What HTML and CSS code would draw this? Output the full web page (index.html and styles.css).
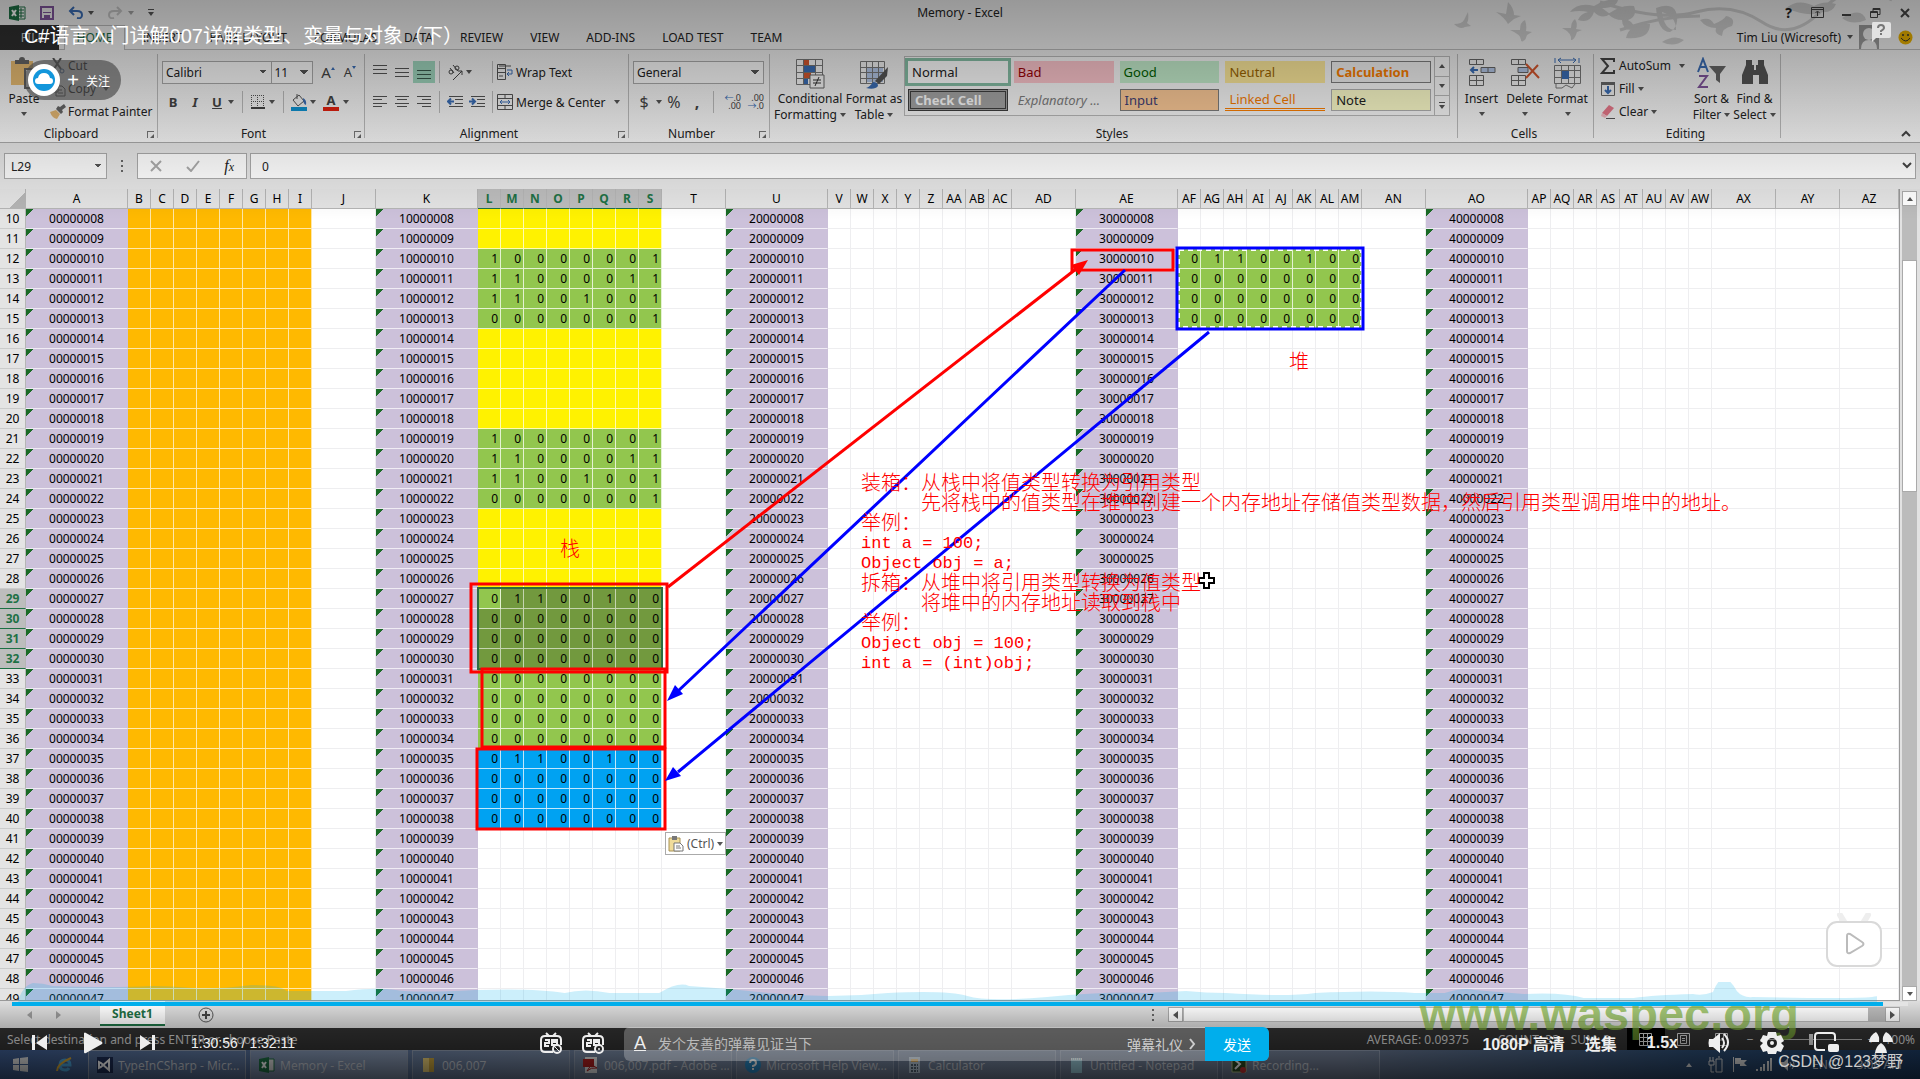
FILE: index.html
```
<!DOCTYPE html>
<html lang="zh-CN">
<head>
<meta charset="UTF-8">
<meta name="viewport" content="width=device-width, initial-scale=1.0">
<title>C#语言入门详解007</title>
<link rel="stylesheet" href="styles.css">
</head>
<body>
<div class="excel">
  <header class="titlebar">
    <svg class="decor" width="460" height="50" viewBox="0 0 460 50" aria-hidden="true">
      <g fill="#cfcfcf">
        <path d="M4 24q8 0 10-4l4-8q1 8-1 11l4 3-6 1q-5 3-11-3z"/>
        <path d="M46 12l10 2 2-12q6 6 6 13l7 1-7 3-6 5q-3-6-12-12z"/>
        <path d="M60 30l10 0q0-8 5-10 2 6 1 11l6 1-5 3q-2 8-6 6 1-6-11-11z"/>
        <path d="M112 28l9 0q0-6 4-9 3 5 1 10l6 1-5 2q-3 9-6 8 1-7-9-12z"/>
        <path d="M120 12q8-10 24-6 12-8 24-6-2 8-16 8l8 6q-8 6-16-2-4 12-16 8 2-6 10-8-8-2-18 0z"/>
        <path d="M158 14q14-10 26-8 4 10-6 14 8 4 4 10-10 0-10-10-8 0-14-6z"/>
        <path d="M212 12q2 18 14 18 0-14-14-18zM206 8q16-6 20 4 4 14-6 20-12 0-14-24zM176 38q4-16 24-14 0 16-24 14zM212 42q12-8 22-2-10 8-22 2z"/>
        <path d="M250 20q10-4 14 4 10-4 12-8 10 2 6 10-10 2-10 10-8-2-6-8-10 0-16-8z"/>
        <path d="M336 8q12-10 28-2 10-6 22-2-4 10-16 8-10 6-34-4zM392 18q10 8 24 2-4-14-24-2z"/>
      </g>
      <path d="M150 2q60 20 96 10t66 10 60-12 70-10M170 30q40-14 80-14" fill="none" stroke="#cfcfcf" stroke-width="3"/>
    </svg>
    <div class="quick">
      <svg width="17" height="16" viewBox="0 0 17 16"><path d="M7 2h9v12H7z" fill="#f4f4f4" stroke="#1e7145"/><path d="M9 5h6M9 8h6M9 11h6M12 3v10" stroke="#1e7145"/><path d="M0 2l10-2v16L0 14z" fill="#1e7145"/><path d="M3 5l4 6M7 5l-4 6" stroke="#fff" stroke-width="2"/></svg>
      <svg width="14" height="14" viewBox="0 0 14 14"><path d="M1 1h12v12H1z" fill="none" stroke="#80559c" stroke-width="2"/><path d="M3 6h8v1H3zM4 9h6v4H4z" fill="#80559c"/></svg>
      <span class="pair"><svg width="15" height="13" viewBox="0 0 15 13"><path d="M6 1L2 5l4 4M2 5h7q5 0 5 4t-5 3" fill="none" stroke="#3a6db5" stroke-width="2"/></svg><i class="caret"></i></span>
      <span class="pair faded"><svg width="15" height="13" viewBox="0 0 15 13"><path d="M9 1l4 4-4 4M13 5H6Q1 5 1 9t5 3" fill="none" stroke="#999" stroke-width="2"/></svg><i class="caret"></i></span>
      <span class="more"><i class="caret"></i></span>
    </div>
    <h1>Memory - Excel</h1>
    <div class="window-buttons">
      <button type="button" aria-label="Help"><b>?</b></button>
      <button type="button" aria-label="Ribbon display"><svg width="13" height="11" viewBox="0 0 13 11" fill="none" stroke="#444"><path d="M.5.5h12v10H.5zM.5 2.500h12M6.500 9V4.500M4.500 6l2-2 2 2"/></svg></button>
      <button type="button" aria-label="Minimize"><svg width="10" height="10" viewBox="0 0 10 10"><path d="M0 6h9v2H0z" fill="#444"/></svg></button>
      <button type="button" aria-label="Restore"><svg width="11" height="10" viewBox="0 0 11 10" fill="none" stroke="#444"><path d="M.5 3.500h7v6h-7zM.5 4.500h7M3 3V.5h7v6H8M3 1.500h7"/></svg></button>
      <button type="button" aria-label="Close"><svg width="10" height="10" viewBox="0 0 10 10"><path d="M1 1l8 8M9 1L1 9" stroke="#444" stroke-width="2"/></svg></button>
    </div>
  </header>

  <nav class="tabs">
    <a class="file" href="#">FILE</a>
    <a class="active" href="#">HOME</a>
    <a href="#">INSERT</a>
    <a href="#">PAGE LAYOUT</a>
    <a href="#">FORMULAS</a>
    <a href="#">DATA</a>
    <a href="#">REVIEW</a>
    <a href="#">VIEW</a>
    <a href="#">ADD-INS</a>
    <a href="#">LOAD TEST</a>
    <a href="#">TEAM</a>
    <div class="account">
      <span>Tim Liu (Wicresoft)</span><i class="caret"></i>
      <svg class="avatar" width="24" height="24" viewBox="0 0 24 24"><path d="M0 0h20v24H0z" fill="#9a9a9a"/><circle cx="10" cy="9" r="6" fill="#eee"/><path d="M2 24q0-9 8-9t8 9z" fill="#eee"/></svg>
      <svg class="smile" width="15" height="15" viewBox="0 0 15 15"><circle cx="7.500" cy="7.500" r="7" fill="#e8b000"/><circle cx="5" cy="5" r="1" fill="#333"/><circle cx="10" cy="5" r="1" fill="#333"/><path d="M3 8q5 6 9 0" fill="none" stroke="#333"/></svg>
    </div>
  </nav>

  <section class="ribbon">
    <div class="group clipboard">
      <div class="group-body">
        <button type="button" class="big paste">
          <svg width="28" height="32" viewBox="0 0 28 32"><path d="M1 4h22v24H1z" fill="#e9bd73"/><path d="M5 7V3h4q0-3 3-3t3 3h4v4z" fill="#666"/><path d="M15 12h12v19H15z" fill="#fff" stroke="#666" stroke-width="2"/></svg>
          <span>Paste</span><i class="caret"></i>
        </button>
        <div class="stack">
          <button type="button"><svg width="16" height="16" viewBox="0 0 16 16"><path d="M3 0l8 11M11 0L4 11" stroke="#555" stroke-width="2"/><circle cx="3" cy="13" r="2" fill="none" stroke="#44699c"/><circle cx="12" cy="13" r="2" fill="none" stroke="#44699c"/></svg>Cut</button>
          <button type="button"><svg width="16" height="16" viewBox="0 0 16 16" fill="none" stroke="#555"><path d="M1 1h7v10H1zM6 5h6l3 3v7H6zM8 9h4M8 12h5"/></svg>Copy<i class="caret far"></i></button>
          <button type="button"><svg width="16" height="16" viewBox="0 0 16 16"><path d="M0 8l6-2 4 4-3 5q-5-1-7-7z" fill="#e5b873"/><path d="M6 5l5 5 2-2-1-2 4-3-2-3-4 3-2-1z" fill="#666"/></svg>Format Painter</button>
        </div>
      </div>
      <div class="group-label">Clipboard<i class="launcher"></i></div>
    </div>

    <div class="group font">
      <div class="group-body rows">
        <div class="row">
          <select class="font-name" aria-label="Font"><option>Calibri</option></select><select class="font-size" aria-label="Font size"><option>11</option></select>
          <button type="button" class="icon grow">A<sup class="up"></sup></button>
          <button type="button" class="icon shrink">A<sup class="down"></sup></button>
        </div>
        <div class="row">
          <button type="button" class="icon"><b>B</b></button>
          <button type="button" class="icon"><b><i>I</i></b></button>
          <button type="button" class="icon"><b><u>U</u></b></button><i class="caret"></i>
          <i class="sep"></i>
          <button type="button" class="icon" aria-label="Borders"><svg width="14" height="14" viewBox="0 0 14 14"><path d="M.5 0v12M6.500 0v12M12.500 0v12M0 .5h13M0 6.500h13" stroke="#555" stroke-dasharray="1 1"/><path d="M0 13h14" stroke="#444" stroke-width="2"/></svg></button><i class="caret"></i>
          <i class="sep"></i>
          <button type="button" class="icon" aria-label="Fill colour"><svg width="16" height="17" viewBox="0 0 16 17"><path d="M2 6l6-5 5 6-6 5zM6 0v5" fill="none" stroke="#555"/><path d="M12 4q4 2 3 7-3-1-3-7z" fill="#3a6db5"/><path d="M0 13h16v4H0z" fill="#0e93d2"/></svg></button><i class="caret"></i>
          <button type="button" class="icon font-color" aria-label="Font colour"><b>A</b></button><i class="caret"></i>
        </div>
      </div>
      <div class="group-label">Font<i class="launcher"></i></div>
    </div>

    <div class="group alignment">
      <div class="group-body rows">
        <div class="row">
          <button type="button" class="icon" aria-label="Top"><svg width="14" height="14" viewBox="0 0 14 14" stroke="#555"><path d="M0 .5h14M0 4.500h14M0 8.500h14"/></svg></button>
          <button type="button" class="icon" aria-label="Middle"><svg width="14" height="14" viewBox="0 0 14 14" stroke="#555"><path d="M0 3.500h14M0 7.500h14M0 11.500h14"/></svg></button>
          <button type="button" class="icon pressed" aria-label="Bottom"><svg width="14" height="14" viewBox="0 0 14 14" stroke="#3a5a4c"><path d="M0 5.500h14M0 9.500h14M0 13.500h14"/></svg></button>
          <i class="sep"></i>
          <button type="button" class="icon" aria-label="Orientation"><svg width="17" height="17" viewBox="0 0 17 17" fill="none" stroke="#444"><circle cx="4" cy="8" r="2"/><path d="M3 4l4 5M6 1l5 6"/><circle cx="10" cy="4" r="2"/><path d="M6 16l9-9M11 7h4v4"/></svg></button><i class="caret"></i>
          <i class="sep push"></i>
          <button type="button" class="label-button"><svg width="16" height="16" viewBox="0 0 16 16" fill="none" stroke="#555"><path d="M.5.5h8v15h-8zM.5 4.500h8M.5 8.500h8M2 2h12M2 12h4"/><path d="M10 6h5v4h-5M12 8l-2 2 2 2" stroke="#3a6db5"/></svg>Wrap Text</button>
        </div>
        <div class="row">
          <button type="button" class="icon" aria-label="Left"><svg width="14" height="12" viewBox="0 0 14 12" stroke="#555"><path d="M0 .5h14M0 3.500h9M0 7.500h14M0 10.500h9"/></svg></button>
          <button type="button" class="icon" aria-label="Center"><svg width="14" height="12" viewBox="0 0 14 12" stroke="#555"><path d="M0 .5h14M2 3.500h10M0 7.500h14M2 10.500h10"/></svg></button>
          <button type="button" class="icon" aria-label="Right"><svg width="14" height="12" viewBox="0 0 14 12" stroke="#555"><path d="M0 .5h14M5 3.500h9M0 7.500h14M5 10.500h9"/></svg></button>
          <i class="sep"></i>
          <button type="button" class="icon" aria-label="Outdent"><svg width="16" height="12" viewBox="0 0 16 12" stroke="#555"><path d="M2 .5h14M8 3.500h8M8 7.500h8M2 10.500h14"/><path d="M7 5.500H1M4 2.500l-3 3 3 3" fill="none" stroke="#3a6db5" stroke-width="2"/></svg></button>
          <button type="button" class="icon" aria-label="Indent"><svg width="16" height="12" viewBox="0 0 16 12" stroke="#555"><path d="M2 .5h14M8 3.500h8M8 7.500h8M2 10.500h14"/><path d="M0 5.500h6M3 2.500l3 3-3 3" fill="none" stroke="#3a6db5" stroke-width="2"/></svg></button>
          <i class="sep"></i>
          <button type="button" class="label-button"><svg width="16" height="16" viewBox="0 0 16 16" fill="none" stroke="#555"><path d="M.5.5h15v15H.5zM.5 4.500h15M.5 11.500h15M8 0v4M8 12v4"/><path d="M3 8h10M5 6L3 8l2 2M11 6l2 2-2 2" stroke="#3a6db5"/></svg>Merge &amp; Center</button><i class="caret wide"></i>
        </div>
      </div>
      <div class="group-label">Alignment<i class="launcher"></i></div>
    </div>

    <div class="group number">
      <div class="group-body rows">
        <div class="row"><select class="format" aria-label="Number format"><option>General</option></select></div>
        <div class="row">
          <button type="button" class="icon sign">$</button><i class="caret"></i>
          <button type="button" class="icon sign">%</button>
          <button type="button" class="icon sign"><b>,</b></button>
          <i class="sep"></i>
          <button type="button" class="icon decimal"><span><em>←</em>.0</span><span>.00</span></button>
          <button type="button" class="icon decimal"><span>.00</span><span><em>→</em>.0</span></button>
        </div>
      </div>
      <div class="group-label">Number<i class="launcher"></i></div>
    </div>

    <div class="group styles">
      <div class="group-body">
        <button type="button" class="big cond">
          <svg width="30" height="32" viewBox="0 0 30 32"><path d="M1 2h26v25H1z" fill="#f8f8f8"/><path d="M8 2h6v6H8zM8 15h8v6H8z" fill="#d4572e"/><path d="M8 9h12v6H8zM8 21h5v6H8z" fill="#3a6db5"/><path d="M1.500 2.500h26v25h-26zM1 8.500h26M1 15.500h26M1 21.500h26M8.500 2v25M20.500 2v25" fill="none" stroke="#777"/><path d="M15 18h14v13H15z" fill="#f8f8f8" stroke="#666"/><path d="M18 23h8M18 26h8M24 20l-4 9" stroke="#333"/></svg>
          <span>Conditional</span><span>Formatting<i class="caret"></i></span>
        </button>
        <button type="button" class="big table-btn">
          <svg width="30" height="32" viewBox="0 0 30 32"><path d="M8 10h16v15H8z" fill="#b4c7e7"/><path d="M1.500 4.500h24v22h-24zM1 10.500h25M1 15.500h25M1 21.500h25M7.500 4v22M13.500 4v22M19.500 4v22" fill="none" stroke="#777"/><path d="M29 10l-1 9-8 8-4-3z" fill="#555"/><path d="M14 25q5 0 5 4-3 4-12 2 4-1 7-6z" fill="#3a6db5"/></svg>
          <span>Format as</span><span>Table<i class="caret"></i></span>
        </button>
        <div class="gallery">
          <div class="cells">
            <button type="button" class="normal">Normal</button>
            <button type="button" class="bad">Bad</button>
            <button type="button" class="good">Good</button>
            <button type="button" class="neutral">Neutral</button>
            <button type="button" class="calc">Calculation</button>
            <button type="button" class="check">Check Cell</button>
            <button type="button" class="explain">Explanatory ...</button>
            <button type="button" class="input">Input</button>
            <button type="button" class="linked">Linked Cell</button>
            <button type="button" class="note">Note</button>
          </div>
          <div class="gallery-scroll"><button type="button" aria-label="Up"><i class="caret flip"></i></button><button type="button" aria-label="Down"><i class="caret"></i></button><button type="button" aria-label="More"><span class="more"><i class="caret"></i></span></button></div>
        </div>
      </div>
      <div class="group-label plain">Styles</div>
    </div>

    <div class="group cellgroup">
      <div class="group-body">
        <button type="button" class="big"><svg width="28" height="32" viewBox="0 0 28 32" fill="none" stroke="#666"><path d="M1.500 2.500h14v5h-14zM8.500 2v5M1.500 18.500h14v10h-14zM8.500 18v10M1 23.500h14"/><path d="M13 10.500h14v5H13zM20 10v5" fill="#b4c7e7"/><path d="M10 13H3M6 10l-3 3 3 3" stroke="#3a6db5" stroke-width="2"/></svg><span>Insert</span><i class="caret"></i></button>
        <button type="button" class="big"><svg width="30" height="32" viewBox="0 0 30 32" fill="none" stroke="#666"><path d="M1.500 2.500h14v5h-14zM8.500 2v5M1.500 18.500h14v10h-14zM8.500 18v10M1 23.500h14"/><path d="M8 10.500h10v5H8z" fill="#b4c7e7"/><path d="M16 7l13 14M28 8L16 21" stroke="#d4572e" stroke-width="2"/></svg><span>Delete</span><i class="caret"></i></button>
        <button type="button" class="big"><svg width="30" height="32" viewBox="0 0 30 32" fill="none" stroke="#777"><path d="M1.500 8.500h26v18h-26zM1 13.500h26M1 20.500h26M8.500 8v18M15.500 8v18M21.500 8v18M3 27v4h6l4-3 6 3 3-4"/><path d="M9 14h7v8H9z" fill="#3a6db5" stroke="none"/><path d="M2 1v5M26 1v5M5 3h18M8 1L5 3l3 3M20 1l3 2-3 3" stroke="#3a6db5"/></svg><span>Format</span><i class="caret"></i></button>
      </div>
      <div class="group-label plain">Cells</div>
    </div>

    <div class="group editing">
      <div class="group-body">
        <div class="stack">
          <button type="button"><svg width="16" height="16" viewBox="0 0 16 16"><path d="M14 4V1H2l6 7-6 7h12v-3" fill="none" stroke="#444" stroke-width="2"/></svg>AutoSum<i class="caret far"></i></button>
          <button type="button"><svg width="16" height="16" viewBox="0 0 16 16"><path d="M1.500 1.500h13v13h-13z" fill="#f4f4f4" stroke="#666"/><path d="M1 1h14v3H1z" fill="#666"/><path d="M8 5v7M5 9l3 3 3-3" fill="none" stroke="#3a6db5" stroke-width="2"/></svg>Fill<i class="caret"></i></button>
          <button type="button"><svg width="16" height="16" viewBox="0 0 16 16"><path d="M2 9l7-8 5 3-7 8z" fill="#e8788a"/><path d="M2 9l5 3-2 2-4-2z" fill="#f5bcc4"/><path d="M6 14.500h9" stroke="#555"/></svg>Clear<i class="caret"></i></button>
        </div>
        <button type="button" class="big"><svg width="30" height="32" viewBox="0 0 30 32" fill="none"><path d="M1 15L6 2l5 13M3 10h6" stroke="#3a6db5" stroke-width="2"/><path d="M2 19h8L2 30h9" stroke="#80559c" stroke-width="2"/><path d="M12 9h17l-6 8v9l-4-3v-6z" fill="#666"/></svg><span>Sort &amp;</span><span>Filter<i class="caret"></i></span></button>
        <button type="button" class="big"><svg width="28" height="32" viewBox="0 0 28 32" fill="#555"><path d="M5 3h6v5h2v5h2V8h2V3h6v5l4 10v9h-9v-9h-6v9H1v-9L5 8z"/></svg><span>Find &amp;</span><span>Select<i class="caret"></i></span></button>
      </div>
      <div class="group-label plain">Editing</div>
    </div>
    <svg class="collapse" width="10" height="8" viewBox="0 0 10 8"><path d="M1 6l4-4 4 4" fill="none" stroke="#444" stroke-width="2"/></svg>
  </section>

  <section class="formula-bar">
    <select class="namebox" aria-label="Name box"><option>L29</option></select>
    <i class="dots"></i>
    <div class="fx">
      <svg width="12" height="12" viewBox="0 0 12 12"><path d="M1 1l10 10M11 1L1 11" stroke="#aaa" stroke-width="2"/></svg>
      <svg width="14" height="12" viewBox="0 0 14 12"><path d="M1 7l4 4 8-10" fill="none" stroke="#aaa" stroke-width="2"/></svg>
      <em>f<small>x</small></em>
    </div>
    <div class="formula">
      <input type="text" value="0" aria-label="Formula">
      <svg width="10" height="8" viewBox="0 0 10 8"><path d="M1 1l4 4 4-4" fill="none" stroke="#444" stroke-width="2"/></svg>
    </div>
  </section>

  <main class="workspace">
    <div class="sheet">
      <table id="grid"></table>

      <svg class="marks" width="1400" height="810" viewBox="0 0 1400 810" aria-hidden="true">
        <rect x="478" y="399" width="184" height="81" fill="none" stroke="#2f6b3f" stroke-width="2"/>
        <rect x="1179" y="61" width="182" height="77" fill="none" stroke="#fff" stroke-width="2" stroke-dasharray="5 4"/>
        <g fill="none" stroke="#f00" stroke-width="3">
          <rect x="471" y="395" width="196" height="88"/>
          <rect x="482" y="480" width="183" height="78"/>
          <rect x="477" y="560" width="188" height="80"/>
          <rect x="1072" y="61" width="101" height="20"/>
          <path d="M668 398L1076 80"/>
        </g>
        <path d="M1088 71l-9 15-8-10z" fill="#f00"/>
        <g fill="none" stroke="#00f" stroke-width="3">
          <rect x="1177" y="59" width="186" height="81"/>
          <path d="M1125 81L677 503M1209 143L678 583"/>
        </g>
        <path d="M667 512l8-16 8 9zM665 592l8-14 8 9z" fill="#00f"/>
        <path d="M1204 384h5v5h5v5h-5v5h-5v-5h-5v-5h5z" fill="#fff" stroke="#000" stroke-width="2"/>
      </svg>
      <span class="mark stack-mark">栈</span>
      <span class="mark heap-mark">堆</span>
      <div class="notes">
        <p>装箱：从栈中将值类型转换为引用类型</p>
        <p class="indent">先将栈中的值类型在堆中创建一个内存地址存储值类型数据，然后引用类型调用堆中的地址。</p>
        <p>举例：</p>
        <p class="code">int a = 100;</p>
        <p class="code">Object obj = a;</p>
        <p>拆箱：从堆中将引用类型转换为值类型</p>
        <p class="indent">将堆中的内存地址读取到栈中</p>
        <p>举例：</p>
        <p class="code">Object obj = 100;</p>
        <p class="code">int a = (int)obj;</p>
      </div>
      <button type="button" class="paste-options">
        <svg width="16" height="17" viewBox="0 0 16 17"><path d="M1 3h11v13H1z" fill="#f0dc9a" stroke="#a89254"/><path d="M4 1h5v4H4z" fill="#777"/><path d="M6 8h6l3 3v5H6z" fill="#fff" stroke="#777"/><path d="M8 11h4M8 13h5" stroke="#777"/></svg>
        (Ctrl)<i class="caret"></i>
      </button>
    </div>
    <div class="vscroll">
      <button type="button" aria-label="Scroll up"><i class="caret flip"></i></button>
      <div class="track"><div class="thumb"></div></div>
      <button type="button" aria-label="Scroll down"><i class="caret"></i></button>
    </div>
  </main>

  <section class="sheet-tabs">
    <i class="arrow left"></i><i class="arrow right"></i>
    <a class="sheet-tab" href="#">Sheet1</a>
    <svg width="18" height="18" viewBox="0 0 18 18"><circle cx="9" cy="9" r="7" fill="none" stroke="#555"/><path d="M9 5v8M5 9h8" stroke="#444" stroke-width="2"/></svg>
    <i class="dots"></i>
    <div class="hscroll">
      <button type="button" aria-label="Scroll left"><i class="arrow left"></i></button>
      <div class="thumb"></div>
      <button type="button" aria-label="Scroll right"><i class="arrow right"></i></button>
    </div>
  </section>

  <footer class="status">
    <span class="message">Select destination and press ENTER or choose Paste</span>
    <span class="average">AVERAGE: 0.09375</span><span class="count">COUNT: 32</span><span class="sum">SUM: 3</span>
    <i class="view on"><svg width="13" height="13" viewBox="0 0 13 13" fill="none" stroke="#ccc"><path d="M.5.5h12v12H.5zM4.500 0v13M8.500 0v13M0 4.500h13M0 8.500h13"/></svg></i>
    <i class="view"><svg width="13" height="13" viewBox="0 0 13 13" fill="none" stroke="#ccc"><path d="M.5.5h12v12H.5zM3.500 2.500h6v8h-6zM5 5.500h3M5 7.500h3"/></svg></i>
    <i class="view"><svg width="13" height="13" viewBox="0 0 13 13" fill="none" stroke="#ccc"><path d="M.5.5h12v12H.5zM4.500 0v7h4V0"/></svg></i>
    <span>−</span><input type="range" aria-label="Zoom" value="50"><span>+</span><span class="zoom">100%</span>
  </footer>

  <nav class="taskbar">
    <a class="pin" href="#" aria-label="Start"><svg width="15" height="15" viewBox="0 0 15 15" fill="#e0e0e0"><path d="M0 2l6-1v6H0zM7 1l8-1v7H7zM0 8h6v6l-6-1zM7 8h8v7l-8-1z"/></svg></a>
    <a class="pin" href="#" aria-label="Internet Explorer"><svg width="17" height="17" viewBox="0 0 17 17" fill="none"><path d="M4 9h10q0-5-5-5t-5 5 5 5q3 0 4-2" stroke="#4aa3d8" stroke-width="3"/><path d="M1 15Q1 8 15 2" stroke="#d8a733" stroke-width="2"/></svg></a>
    <a class="task" href="#"><svg width="16" height="16" viewBox="0 0 16 16"><path d="M0 0h16v16H0z" fill="#1d2d55"/><path d="M12 3v10L4 6 2 5v6l2-1 8-7z" fill="none" stroke="#fff" stroke-width="2"/></svg>TypeInCSharp - Micr...</a>
    <a class="task current" href="#"><svg width="16" height="16" viewBox="0 0 16 16"><path d="M8 2h7v12H8z" fill="#ddd" stroke="#1e7145"/><path d="M0 2l10-2v16L0 14z" fill="#1e7145"/><path d="M3 5l4 6M7 5l-4 6" stroke="#fff" stroke-width="2"/></svg>Memory - Excel</a>
    <a class="task" href="#"><svg width="16" height="16" viewBox="0 0 16 16"><path d="M2 1h9v14H2z" fill="#f0d47a"/><path d="M8 1h5v14H8z" fill="#cfa93f"/></svg>006,007</a>
    <a class="task" href="#"><svg width="16" height="16" viewBox="0 0 16 16"><path d="M2 0h12v16H2z" fill="#eee"/><path d="M0 2h11v8H0z" fill="#b32020"/><path d="M4 14q4-5 5-9 1 5 5 6-6-1-10 3z" fill="none" stroke="#b32020"/></svg>006,007.pdf - Adobe ...</a>
    <a class="task" href="#"><svg width="16" height="16" viewBox="0 0 16 16"><circle cx="8" cy="8" r="8" fill="#2a8ac6"/><path d="M5 6q0-3 3-3t3 3q0 2-3 3v1M8 11v2" fill="none" stroke="#fff" stroke-width="2"/></svg>Microsoft Help View...</a>
    <a class="task" href="#"><svg width="16" height="16" viewBox="0 0 16 16"><path d="M2 0h11v16H2z" fill="#bcd"/><path d="M4 2h7v3H4z" fill="#e8b96a"/><path d="M4 8h7M4 11h7M4 14h7" stroke="#567" stroke-dasharray="2 1" stroke-width="2"/></svg>Calculator</a>
    <a class="task" href="#"><svg width="16" height="16" viewBox="0 0 16 16"><path d="M2 1h11v15H2z" fill="#9fd0df"/><path d="M2 2h11" stroke="#eee" stroke-width="2" stroke-dasharray="1 1"/></svg>Untitled - Notepad</a>
    <a class="task" href="#"><svg width="16" height="16" viewBox="0 0 16 16"><path d="M1 0h14v15H1z" fill="#2c4a22" stroke="#b9c98a"/><path d="M4 3l5 4-5 5" fill="none" stroke="#fff" stroke-width="2"/><circle cx="12" cy="13" r="3" fill="#c33"/></svg>Recording...</a>
    <div class="tray">
      <i class="caret flip"></i>
      <svg width="16" height="17" viewBox="0 0 16 17" fill="none" stroke="#ddd"><path d="M8 3h6v13H8zM10 1h2M2 1v4M5 1v4M1 5h5v4H1zM3 9v7h3"/></svg>
      <svg width="16" height="15" viewBox="0 0 16 15" fill="#ddd"><path d="M1 0h1v15H1zM3 1h6v2h6l-3 3 3 3H8V7H3z"/></svg>
      <svg width="17" height="13" viewBox="0 0 17 13" fill="#ddd"><path d="M0 11h2v2H0zM4 9h2v4H4zM7 6h2v7H7zM11 3h2v10h-2zM14 0h2v13h-2z"/></svg>
      <svg width="15" height="13" viewBox="0 0 15 13" fill="#ddd"><path d="M0 4h3l4-4v13L3 9H0z"/><path d="M9 4q2 2 0 5M11 2q4 4 0 9" fill="none" stroke="#ddd"/></svg>
      <span class="lang">ENG</span><span class="clock">3:00 AM</span>
    </div>
  </nav>
</div>

<!-- video player layer -->
<div class="player">
  <div class="player-top">
    <h2>C#语言入门详解007详解类型、变量与对象（下）</h2>
    <button type="button" class="follow">
      <svg width="32" height="32" viewBox="0 0 32 32"><circle cx="16" cy="16" r="16" fill="#fff"/><circle cx="16" cy="16" r="11" fill="#1296db"/><path d="M10 20q-3 0-3-3t3-3q1-5 6-5t6 5q3 0 3 3t-3 3z" fill="#fff"/></svg>
      <b>+</b> 关注
    </button>
    <svg class="bubble" width="20" height="20" viewBox="0 0 20 20"><path d="M2 0h16q2 0 2 2v12q0 2-2 2H5l-4 4V2q0-2 1-2z" fill="#e2e2e2"/><path d="M7 6q0-3 3-3t3 3q0 1-3 3v1M10 11v2" fill="none" stroke="#777" stroke-width="2"/></svg>
  </div>
  <svg class="tv" width="58" height="56" viewBox="0 0 58 56"><g fill="#fff" stroke="#d9d9d9"><path d="M15 2l6 10M43 2l-6 10" stroke="#eee" stroke-width="6" stroke-linecap="round"/><rect x="2" y="9" width="54" height="44" rx="10" stroke-width="2"/></g><path d="M22 23q0-3 3-2l12 8q3 2 0 4l-12 7q-3 1-3-2z" fill="#fff" stroke="#bbb" stroke-width="2"/></svg>
  <span class="site-mark">www.waspec.org</span>
  <div class="player-bottom">
    <svg class="heat" viewBox="0 0 1870 20" preserveAspectRatio="none" aria-hidden="true"><path d="M0 20Q4 4 15 1q10 0 20 3 60 2 100 0 20 0 40 2t60-3q30 0 35 6h60q30-4 50-1t80 0q60-2 90 3 20-5 45 0h50q20-12 30-7l40 3 40 4q60 6 120 0 60-3 80 3t80 1q60-6 100-4l40-2q20 2 40 2 60 4 90 0 60-3 100 0h30q20-6 30-3l50 4q40-2 60 4h50q20-3 60-4 10 2 20-2 10-26 24-1 6 7 16 6 100 2 120 0 20-3 50-2h100q60-5 75-1 10 3 8 8v6z"/></svg>
    <progress max="1896" value="1871"></progress>
    <div class="controls">
      <button type="button" aria-label="Previous"><svg width="16" height="17" viewBox="0 0 16 17"><path d="M0 1h3v15H0zM15 1v15L4 9z"/></svg></button>
      <button type="button" class="play" aria-label="Play"><svg width="20" height="22" viewBox="0 0 20 22"><path d="M1 1q1-1 2 0l16 9q1 1 0 2L3 21q-2 1-2-1z"/></svg></button>
      <button type="button" class="next" aria-label="Next"><svg width="16" height="17" viewBox="0 0 16 17"><path d="M13 1h3v15h-3zM1 1v15l11-7z"/></svg></button>
      <span class="time">1:30:56 / 1:32:11</span>
      <button type="button" class="danmu" aria-label="弹幕"><svg width="22" height="22" viewBox="0 0 22 22"><path d="M6 1l3 3M16 1l-3 3M13 20H5q-4 0-4-4V8q0-4 4-4h12q4 0 4 4v5M5 8h4v3H5v3h4M12 8h5v5h-5zM12 10h5" fill="none" stroke="#eee" stroke-width="2"/><circle cx="17" cy="17" r="4" fill="none" stroke="#eee" stroke-width="2"/><path d="M14 14l6 6" stroke="#eee"/></svg></button>
      <button type="button" class="danmu" aria-label="弹幕设置"><svg width="22" height="22" viewBox="0 0 22 22"><path d="M6 1l3 3M16 1l-3 3M13 20H5q-4 0-4-4V8q0-4 4-4h12q4 0 4 4v5M5 8h4v3H5v3h4M12 8h5v5h-5zM12 10h5" fill="none" stroke="#eee" stroke-width="2"/><circle cx="17" cy="17" r="4" fill="none" stroke="#eee" stroke-width="2"/><circle cx="17" cy="17" r="1"/></svg></button>
      <form class="send">
        <u>A</u>
        <input type="text" placeholder="发个友善的弹幕见证当下" aria-label="弹幕">
        <a href="#">弹幕礼仪<svg width="7" height="12" viewBox="0 0 7 12"><path d="M1 1l4 5-4 5" fill="none" stroke="#ccc" stroke-width="2"/></svg></a>
        <button type="button">发送</button>
      </form>
      <div class="options">
        <button type="button" class="quality">1080P 高清</button>
        <button type="button" class="episodes">选集</button>
        <button type="button" class="speed">1.5x</button>
        <button type="button" aria-label="音量"><svg width="22" height="20" viewBox="0 0 22 20"><path d="M1 6h4l7-6v20l-7-6H1q-1-4 0-8z"/><path d="M14 5q4 5 0 10M16 1q8 8 0 17" fill="none" stroke="#eee" stroke-width="2"/></svg></button>
        <button type="button" aria-label="设置"><svg width="24" height="22" viewBox="0 0 24 22"><path fill-rule="evenodd" d="M8 0h8l1 4 4-1 3 6-3 2 3 3-3 6-4-1-1 3H8l-1-3-4 1-3-6 3-3-3-2 3-6 4 1zM12 6a5 5 0 100 10 5 5 0 000-10z"/><circle cx="12" cy="11" r="2"/></svg></button>
        <button type="button" aria-label="小窗"><svg width="25" height="21" viewBox="0 0 25 21"><path d="M11 18H4q-3 0-3-3V4q0-3 3-3h14q3 0 3 3v5" fill="none" stroke="#eee" stroke-width="2"/><rect x="14" y="12" width="11" height="8" rx="2"/></svg></button>
        <button type="button" aria-label="全屏"><svg width="24" height="22" viewBox="0 0 24 22"><path d="M7 0q4 4 3 10H0Q1 3 7 0zM17 0q6 3 7 10H14q-1-6 3-10zM12 11q5 3 6 10H6q1-7 6-10z"/></svg></button>
      </div>
    </div>
  </div>
  <span class="csdn">CSDN @123梦野</span>
</div>
<script src="app.js"></script>
</body>
</html>
```

FILE: styles.css
```
* {
  box-sizing: border-box;
}

body {
  margin: 0;
  height: 100vh;
  overflow: hidden;
  position: relative;
  font-family: "Noto Sans", "Noto Sans CJK SC", sans-serif;
  font-size: 12px;
  color: #222;
}

button,
select,
input {
  font: inherit;
  color: inherit;
}

button {
  border: 0;
  padding: 0;
  background: none;
}

a {
  color: inherit;
  text-decoration: none;
}

svg {
  display: block;
  flex: none;
}

.excel {
  height: 100%;
  display: flex;
  flex-direction: column;
  background: #f1f1f1;
}

.caret {
  display: inline-block;
  flex: none;
  border: 3px solid transparent;
  border-top: 4px solid #555;
  border-bottom: 0;
}

.caret.flip {
  border-top: 0;
  border-bottom: 4px solid #555;
}

/* title bar */
.titlebar {
  position: relative;
  height: 25px;
  flex: none;
  display: grid;
  grid-template-columns: 1fr auto 1fr;
  align-items: center;
}

.decor {
  position: absolute;
  right: 10px;
  top: 0;
}

.titlebar h1 {
  margin: 0;
  font-size: 12px;
  font-weight: normal;
}

.quick {
  display: flex;
  align-items: center;
  gap: 14px;
  padding-left: 9px;
}

.pair {
  display: flex;
  align-items: center;
  gap: 5px;
}

.faded {
  opacity: .5;
}

.more {
  border-top: 1px solid #555;
  display: flex;
  padding-top: 2px;
}

.window-buttons {
  position: relative;
  display: flex;
  justify-content: flex-end;
  padding-right: 1px;
}

.window-buttons button {
  width: 29px;
  display: flex;
  justify-content: center;
  align-items: center;
  font-size: 14px;
}

/* ribbon tabs */
.tabs {
  height: 25px;
  flex: none;
  display: flex;
  align-items: center;
  gap: 27px;
  border-bottom: 1px solid #bbb;
}

.tabs .file {
  width: 59px;
  height: 25px;
  line-height: 25px;
  padding-left: 6px;
  text-align: center;
  color: #ccc;
  background: #2f2f2f;
  margin-right: -22px;
}

.tabs .active {
  width: 61px;
  height: 25px;
  line-height: 24px;
  text-align: center;
  color: #1e7145;
  border: 1px solid #bbb;
  border-bottom: 0;
  background: #f5f5f5;
  margin-right: -10px;
}

.account {
  position: relative;
  margin-left: auto;
  display: flex;
  align-items: center;
  gap: 6px;
  padding-right: 7px;
}

.smile {
  margin-left: 9px;
}

/* ribbon */
.ribbon {
  height: 93px;
  flex: none;
  display: flex;
  border-bottom: 1px solid #aaa;
  background: linear-gradient(#f1f1f1, #f8f8f8);
}

.group {
  flex: none;
  display: flex;
  flex-direction: column;
  position: relative;
}

.group::after {
  content: "";
  position: absolute;
  right: 0;
  top: 4px;
  bottom: 4px;
  border-right: 1px solid #bbb;
}

.group-body {
  height: 75px;
  display: flex;
}

.group-label {
  line-height: 17px;
  padding-right: 16px;
  text-align: center;
}

.group-label.plain {
  padding-right: 4px;
}

.launcher {
  position: absolute;
  right: 4px;
  bottom: 4px;
  width: 7px;
  height: 7px;
  border: 1px solid #777;
  border-right: 0;
  border-bottom: 0;
}

.launcher::after {
  content: "";
  position: absolute;
  right: 0;
  bottom: 0;
  border: 2px solid #666;
  border-left-color: transparent;
  border-top-color: transparent;
}

.clipboard { width: 158px; }
.font { width: 207px; }
.alignment { width: 264px; }
.number { width: 141px; }
.styles { flex: 0 1 688px; }
.cellgroup { width: 136px; }
.editing { width: 187px; }

.rows {
  flex-direction: column;
  padding: 11px 4px 0;
  gap: 8px;
}

.row {
  height: 22px;
  display: flex;
  align-items: center;
}

.stack {
  display: flex;
  flex-direction: column;
  padding: 4px 0 0 5px;
}

.stack button {
  height: 23px;
  display: flex;
  align-items: center;
  gap: 3px;
  white-space: nowrap;
}

.clipboard .stack {
  padding-left: 2px;
}

.clipboard .stack button {
  gap: 2px;
}

.big {
  display: flex;
  flex-direction: column;
  align-items: center;
  padding-top: 7px;
  line-height: 16px;
  white-space: nowrap;
}

.big span {
  display: flex;
  align-items: center;
  gap: 3px;
}

.big svg {
  margin-bottom: 2px;
}

.big > .caret {
  margin-top: 5px;
}

.paste {
  width: 48px;
}

.icon {
  width: 22px;
  height: 22px;
  flex: none;
  display: flex;
  align-items: center;
  justify-content: center;
  color: #444;
  font-size: 13px;
}

.icon.pressed {
  background: #9fd5bd;
}

.grow {
  margin-left: 4px;
  font-size: 15px;
}

.up,
.down {
  border: 2px solid transparent;
  border-bottom: 3px solid #3a6db5;
  margin-bottom: 10px;
}

.down {
  border-bottom: 0;
  border-top: 3px solid #3a6db5;
}

.number .row + .row {
  gap: 1px;
}

.font-color {
  height: 17px;
  width: 16px;
  margin: 0 4px 0 7px;
  border-bottom: 4px solid #e3210f;
}

.sep {
  align-self: stretch;
  border-left: 1px solid #bbb;
  margin: 0 4px;
}

.font .sep {
  margin-left: 8px;
}

.push {
  margin-left: 20px;
}

.label-button {
  display: flex;
  align-items: center;
  gap: 3px;
  white-space: nowrap;
}

.caret.wide {
  margin-left: 8px;
}

select {
  appearance: none;
  height: 23px;
  padding: 0 3px;
  border: 1px solid #aaa;
  border-radius: 0;
  background: linear-gradient(45deg, transparent 50%, #555 50%) right 8px center / 4px 4px no-repeat,
    linear-gradient(-45deg, transparent 50%, #555 50%) right 4px center / 4px 4px no-repeat, #fafafa;
}

.font-name { width: 111px; }

.font-size {
  width: 43px;
  margin-left: -1px;
}

.format { width: 131px; }

.sign {
  font-size: 16px;
}

.decimal {
  flex-direction: column;
  align-items: flex-end;
  font-size: 9px;
  line-height: 8px;
}

.decimal em {
  color: #3a6db5;
  font-style: normal;
}

.cond {
  width: 80px;
}

.table-btn {
  width: 48px;
}

.gallery {
  display: flex;
  height: 60px;
  margin: 6px 8px 0 6px;
  border: 1px solid #bbb;
  background: #fafafa;
  flex: 1;
}

.cells {
  flex: 1;
  padding: 4px 3px;
  display: grid;
  grid-template-columns: repeat(5, 1fr);
  grid-auto-rows: 22px;
  gap: 6px;
}

.cells button {
  text-align: left;
  padding-left: 4px;
  font-size: 13px;
  line-height: 20px;
  white-space: nowrap;
}

.cells .normal {
  background: #fff;
  outline: 3px solid #86bfa6;
}

.bad { background: #ffc7ce; color: #9c0006; }
.good { background: #c6efce; color: #006100; }
.neutral { background: #ffeb9c; color: #9c6500; }

.calc {
  border: 1px solid #7f7f7f;
  background: #f2f2f2;
  color: #fa7d00;
  font-weight: bold;
}

.check {
  border: 3px double #3f3f3f;
  background: #a5a5a5;
  color: #fff;
  font-weight: bold;
}

.cells .check { line-height: 16px; }
.explain { color: #7f7f7f; font-style: italic; }

.input {
  border: 1px solid #7f7f7f;
  background: #ffcc99;
  color: #3f3f76;
}

.linked {
  border-bottom: 3px double #ff8001;
  color: #fa7d00;
}

.note {
  border: 1px solid #b2b2b2;
  background: #ffffcc;
}

.gallery-scroll {
  width: 15px;
  display: flex;
  flex-direction: column;
  border-left: 1px solid #bbb;
}

.gallery-scroll button {
  flex: 1;
  display: flex;
  align-items: center;
  justify-content: center;
}

.gallery-scroll button + button {
  border-top: 1px solid #bbb;
}

.cellgroup .group-body {
  padding-left: 2px;
}

.cellgroup .big,
.editing .big {
  width: 43px;
}

.editing .stack {
  padding-left: 6px;
  width: 96px;
}

.far {
  margin-left: 5px;
}

.collapse {
  margin: auto 9px 4px auto;
}

/* formula bar */
.formula-bar {
  height: 46px;
  flex: none;
  display: flex;
  padding: 10px 4px;
  background: #e6e6e6;
}

.formula-bar > * {
  height: 26px;
}

.namebox {
  width: 103px;
  padding-left: 6px;
}

.dots {
  width: 2px;
  height: 12px;
  margin: auto 14px;
  background: repeating-linear-gradient(#666 0 2px, transparent 2px 5px);
}

.formula-bar .dots {
  height: 12px;
}

.fx {
  width: 110px;
  display: flex;
  align-items: center;
  justify-content: space-between;
  padding: 0 12px;
  border: 1px solid #aaa;
  background: #fff;
}

.fx em {
  font-family: "Liberation Serif", serif;
  font-size: 16px;
}

.fx small {
  font-size: 12px;
}

.formula {
  flex: 1;
  margin-left: 3px;
  display: flex;
  align-items: center;
  padding: 0 3px 0 11px;
  border: 1px solid #aaa;
  background: #fff;
}

.formula input {
  flex: 1;
  border: 0;
  padding: 0;
  background: none;
  outline: 0;
}

/* sheet */
.workspace {
  flex: 1;
  min-height: 0;
  display: flex;
  background: #e2e2e2;
}

.sheet {
  flex: 1;
  min-width: 0;
  position: relative;
  overflow: hidden;
  border-right: 1px solid #999;
  border-bottom: 1px solid #999;
}

#grid {
  width: 100%;
  table-layout: fixed;
  border-spacing: 0;
  background: #fff;
}

.w-head { width: 26px; }
.w-bit { width: 23px; }
.w-gap { width: 64px; }
.w-addr { width: 102px; }

#grid th,
#grid td {
  height: 20px;
  padding: 1px 0 0;
  line-height: 18px;
  text-align: center;
  font-weight: normal;
  color: #000;
  white-space: nowrap;
  border-right: 1px solid #eeeef0;
  border-bottom: 1px solid #eeeef0;
}

#grid th {
  background: #e4e4e4;
  border-color: #b5b5b5;
}

#grid thead th {
  padding: 0;
  line-height: 19px;
}

#grid th.on {
  background: #bdbdbd;
  color: #1e7145;
  font-weight: bold;
  border-bottom-color: #1e7145;
}

#grid tbody th {
  border-bottom-color: #ccc;
}

#grid .corner {
  background: linear-gradient(135deg, #e4e4e4 65%, #b5b5b5 65%);
}

#grid .addr {
  background: linear-gradient(135deg, #1a6b26 5px, transparent 5px) #ccc1da;
  border-right-color: #ccc1da;
  border-bottom-color: #f0ecf4;
}

#grid .orange { background: #ffb900; border-color: #ffe7a8; }
#grid .yellow { background: #fff200; border-color: #fffbb0; }
#grid .green { background: #92c64e; border-color: #e4f2d2; }
#grid .picked { background: #72993e; border-color: #c4d4b0; }
#grid .blue { background: #00a2f2; border-color: #c0e6fa; }

#grid .bit {
  text-align: right;
  padding-right: 2px;
}

.marks {
  position: absolute;
  left: 0;
  top: 0;
}

.mark,
.notes {
  position: absolute;
  color: #f00;
  font-family: "Noto Sans CJK SC", sans-serif;
  font-weight: 300;
  font-size: 20px;
  line-height: 20px;
}

.stack-mark {
  left: 560px;
  top: 349px;
}

.heap-mark {
  left: 1289px;
  top: 162px;
}

.notes {
  left: 861px;
  top: 283px;
  white-space: nowrap;
}

.notes p {
  margin: 0;
  height: 20px;
}

.notes .indent {
  padding-left: 60px;
}

.notes .code {
  font-family: "Liberation Mono", monospace;
  font-size: 17px;
  line-height: 24px;
}

.paste-options {
  position: absolute;
  left: 665px;
  top: 643px;
  height: 23px;
  display: flex;
  align-items: center;
  gap: 3px;
  padding: 0 2px;
  border: 1px solid #aaa;
  background: #fff;
  color: #555;
}

.vscroll {
  width: 20px;
  display: flex;
  flex-direction: column;
  padding: 2px 3px 0 2px;
}

.vscroll button,
.hscroll button {
  width: 15px;
  height: 15px;
  flex: none;
  display: flex;
  align-items: center;
  justify-content: center;
  border: 1px solid #aaa;
  background: #fff;
}

.track {
  flex: 1;
  padding-top: 54px;
  background: #bbb;
}

.track .thumb {
  height: 32%;
  border: 1px solid #aaa;
  background: #fff;
}

/* sheet tabs */
.sheet-tabs {
  height: 27px;
  flex: none;
  display: flex;
  align-items: center;
  background: #dcdcdc;
  padding: 0 20px 0 27px;
}

.arrow {
  border: 4px solid transparent;
  border-right: 5px solid #555;
  border-left: 0;
}

.arrow.right {
  border-right: 0;
  border-left: 5px solid #555;
}

.sheet-tabs > .arrow {
  opacity: .5;
  margin-right: 24px;
}

.sheet-tab {
  width: 65px;
  height: 25px;
  line-height: 25px;
  margin: 0 32px 2px 15px;
  text-align: center;
  font-weight: bold;
  color: #1e7145;
  background: #fff;
  border-bottom: 2px solid #1e7145;
}

.sheet-tabs .dots {
  margin: 0 14px 0 auto;
}

.hscroll {
  width: 732px;
  display: flex;
  background: #bbb;
  justify-content: space-between;
}

.hscroll .thumb {
  flex: 1;
  margin-right: 16px;
  border: 1px solid #bbb;
  background: #fff;
}

/* status bar */
.status {
  height: 22px;
  flex: none;
  display: flex;
  align-items: center;
  padding: 0 5px 0 7px;
  background: #303030;
  color: #c8c8c8;
}

.message {
  flex: 1;
}

.average { width: 131px; }
.count { width: 73px; }
.sum { width: 56px; }

.view {
  width: 38px;
  height: 22px;
  display: flex;
  align-items: center;
  justify-content: center;
}

.view.on {
  background: #000;
}

.status input {
  appearance: none;
  width: 102px;
  height: 1px;
  margin: 0 6px;
  background: #aaa;
}

.status input::-webkit-slider-thumb {
  appearance: none;
  width: 4px;
  height: 11px;
  background: #ccc;
}

.status .view + span {
  margin-left: 6px;
}

.zoom {
  margin-left: 10px;
}

/* taskbar */
.taskbar {
  height: 29px;
  flex: none;
  display: flex;
  align-items: center;
  gap: 4px;
  background: linear-gradient(90deg, #3c5a8c, #6a7c98 30%, #66748c 70%, #2b4a70 88%, #1c3a60);
  color: #c4c9d2;
}

.pin {
  width: 40px;
  display: flex;
  justify-content: center;
}

.task {
  flex: 0 1 158px;
  height: 29px;
  display: flex;
  align-items: center;
  gap: 5px;
  padding-left: 8px;
  white-space: nowrap;
  border: 1px solid #8c98ac;
  border-bottom: 0;
  background: rgba(255, 255, 255, .08);
}

.task.current {
  background: rgba(255, 255, 255, .25);
}

.tray {
  margin-left: auto;
  display: flex;
  align-items: center;
  gap: 8px;
  padding-right: 18px;
}

.tray .caret {
  border-bottom-color: #ddd;
  margin-right: 8px;
}

.lang {
  margin-left: 8px;
}

.clock {
  margin-left: 12px;
}

/* player */
.player {
  position: absolute;
  inset: 0;
  color: #eee;
  font-family: "Liberation Sans", "Noto Sans CJK SC", sans-serif;
}

.player-top {
  height: 220px;
  padding: 20px 24px 0;
  background: linear-gradient(rgba(0, 0, 0, .37), transparent);
}

.player-top h2 {
  margin: 0;
  font-size: 20px;
  line-height: 32px;
  font-weight: normal;
  color: #fff;
}

.follow {
  width: 97px;
  height: 40px;
  margin-top: 8px;
  display: flex;
  align-items: center;
  gap: 6px;
  padding-left: 4px;
  border-radius: 20px;
  background: rgba(70, 70, 70, .65);
  color: #fff;
}

.follow b {
  width: 14px;
  font-size: 20px;
  font-weight: normal;
}

.bubble {
  position: absolute;
  right: 29px;
  top: 22px;
}

.tv {
  position: absolute;
  right: 37px;
  bottom: 110px;
}

.player-bottom {
  position: absolute;
  left: 0;
  right: 0;
  bottom: 0;
  padding: 0 12px;
  background: linear-gradient(transparent 20px, rgba(0, 0, 0, .65));
}

.heat {
  width: calc(100% - 37px);
  height: 20px;
  margin-left: 6px;
  fill: rgba(0, 174, 236, .2);
}

progress {
  appearance: none;
  display: block;
  width: 100%;
  height: 4px;
  border: 0;
}

progress::-webkit-progress-bar {
  background: #e4e4e4;
}

progress::-webkit-progress-value {
  background: #00aeec;
}

.controls {
  height: 73px;
  display: flex;
  align-items: center;
  fill: #eee;
}

.controls > button {
  margin-left: 20px;
}

.controls .play {
  margin-left: 35px;
}

.controls .next {
  margin-left: 36px;
}

.controls .time {
  flex: 0 0 349px;
  margin-left: 36px;
  font-size: 14px;
}

.controls .danmu {
  margin: 0 20px 0 0;
}

.send {
  flex: 0 1 645px;
  height: 34px;
  margin-top: 2px;
  display: flex;
  align-items: center;
  padding-left: 10px;
  border-radius: 6px;
  background: rgba(255, 255, 255, .25);
  font-size: 14px;
  color: #ccc;
}

.send u {
  font-size: 18px;
  color: #eee;
}

.send input {
  flex: 1;
  padding: 0;
  margin-left: 12px;
  border: 0;
  background: none;
  outline: 0;
}

.send input::placeholder {
  color: #bbb;
}

.send a {
  display: flex;
  align-items: center;
  gap: 6px;
}

.send button {
  width: 64px;
  height: 34px;
  margin-left: 9px;
  border-radius: 0 6px 6px 0;
  background: #00aeec;
  color: #fff;
}

.options {
  margin-left: auto;
  display: flex;
  align-items: center;
  gap: 30px;
  padding-right: 15px;
  font-size: 16px;
  font-weight: bold;
}

.quality {
  margin-right: -10px;
}

.site-mark {
  position: absolute;
  right: 121px;
  bottom: 42px;
  font-size: 47px;
  line-height: 47px;
  font-weight: bold;
  color: rgba(126, 178, 56, .7);
}

.csdn {
  position: absolute;
  right: 17px;
  bottom: 7px;
  font-size: 16px;
  line-height: 20px;
  color: #ccc;
}
```

FILE: app.js
```
const grid = document.getElementById('grid');

// column kinds: addr = address column, bit = narrow, gap = wide empty
const cols = [];
const letters = n => (n >= 26 ? String.fromCharCode(64 + Math.floor(n / 26)) : '') + String.fromCharCode(65 + n % 26);

for (let block = 0; block < 5; block++) {
  cols.push({ kind: 'addr', block });
  for (let i = 0; i < 8; i++) cols.push({ kind: 'bit', block, i });
  cols.push({ kind: 'gap', block });
}
cols.push({ kind: 'gap' }, { kind: 'last' });

cols.forEach((c, n) => { c.name = letters(n); });

const int100 = { 12: '10000001', 13: '11000011', 14: '11001001', 15: '00000001' };
const stack = {
  ...int100,
  21: int100[12], 22: int100[13], 23: int100[14], 24: int100[15],
  29: '01100100', 37: '01100100'
};
const heap = { 12: '01100100' };

function bitCell(row, col) {
  if (col.block === 0) return ['orange', ''];
  if (col.block === 1 && row <= 40) {
    let color = 'yellow';
    if (row in stack || (row > 29 && row < 37)) color = 'green';
    if (row >= 29 && row <= 32 && !(row === 29 && col.i === 0)) color = 'picked';
    if (row >= 37) color = 'blue';
    return [color, color === 'yellow' ? '' : (stack[row] || '00000000')[col.i]];
  }
  if (col.block === 3 && row >= 12 && row <= 15) {
    return ['green', (heap[row] || '00000000')[col.i]];
  }
  return ['', ''];
}

let html = '<colgroup><col class="w-head">';
cols.forEach(c => { html += `<col class="w-${c.kind}">`; });
html += '</colgroup><thead><tr><th class="corner"></th>';
cols.forEach(c => {
  const on = c.kind === 'bit' && c.block === 1 ? ' class="on"' : '';
  html += `<th${on}>${c.name}</th>`;
});
html += '</tr></thead><tbody>';

for (let row = 10; row < 50; row++) {
  const on = row >= 29 && row <= 32 ? ' class="on"' : '';
  html += `<tr><th${on}>${row}</th>`;
  cols.forEach(c => {
    if (c.kind === 'addr') {
      html += `<td class="addr">${c.block}${String(row - 2).padStart(7, '0')}</td>`;
    } else if (c.kind === 'bit') {
      const [color, text] = bitCell(row, c);
      html += `<td class="bit ${color}">${text}</td>`;
    } else {
      html += '<td></td>';
    }
  });
  html += '</tr>';
}
grid.innerHTML = html + '</tbody>';
```
